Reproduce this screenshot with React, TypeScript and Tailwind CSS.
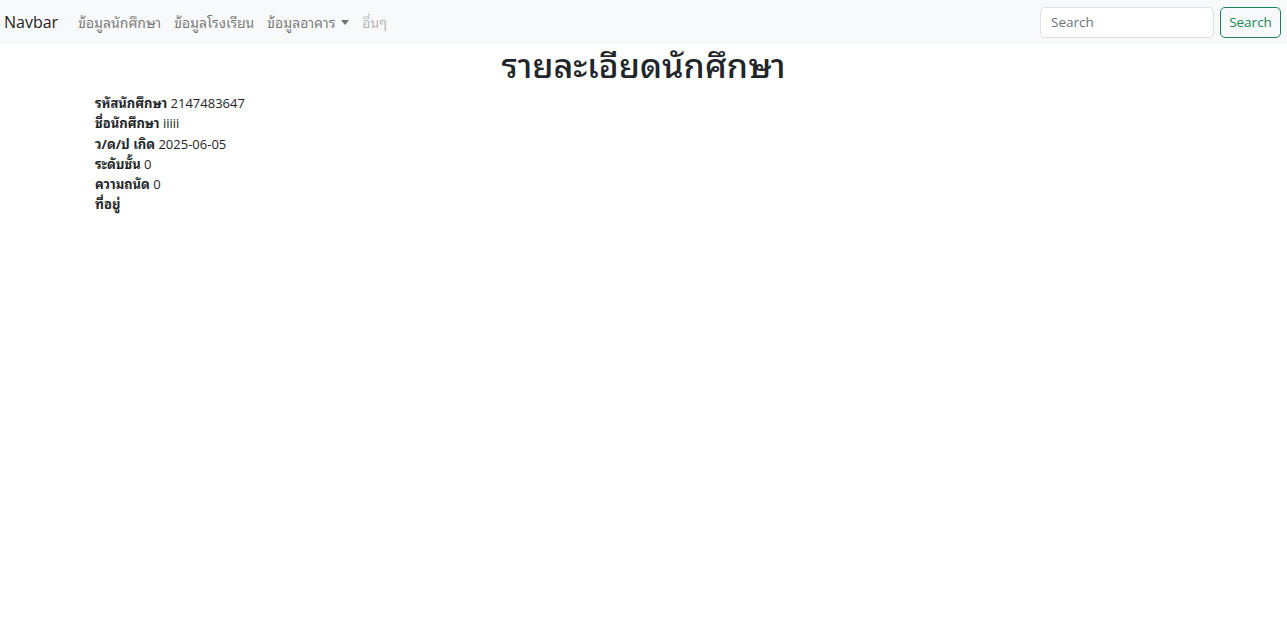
export default function App() {
  const rows: [string, string][] = [
    ["รหัสนักศึกษา", "2147483647"],
    ["ชื่อนักศึกษา", "iiiii"],
    ["ว/ด/ป เกิด", "2025-06-05"],
    ["ระดับชั้น", "0"],
    ["ความถนัด", "0"],
    ["ที่อยู่", ""],
  ];

  return (
    <div
      className="min-h-screen bg-white text-[#212529]"
      style={{ fontFamily: '"Open Sans", "Noto Sans Thai Looped", sans-serif' }}
    >
      {/* navbar */}
      <nav className="flex h-[44px] items-center bg-[#f8f9fa] pl-[4px] pr-[6px]">
        <a className="mr-[20px] text-[16px] leading-none text-black/90">Navbar</a>
        <ul className="flex items-center gap-[13px] text-[14px] text-black/55">
          <li>ข้อมูลนักศึกษา</li>
          <li>ข้อมูลโรงเรียน</li>
          <li className="flex items-center gap-[6px]">
            ข้อมูลอาคาร
            <span className="inline-block h-0 w-0 border-x-[4px] border-t-[5px] border-x-transparent border-t-black/55" />
          </li>
          <li className="text-black/30">อื่นๆ</li>
        </ul>
        <form className="ml-auto flex items-center gap-[6px]">
          <input
            placeholder="Search"
            className="h-[31px] w-[174px] rounded-[5px] border border-[#dee2e6] bg-white px-[10px] text-[13.5px] placeholder:text-[#6c757d] outline-none"
          />
          <button
            type="button"
            className="h-[31px] w-[61px] rounded-[5px] border border-[#198754] text-[13.5px] text-[#198754]"
          >
            Search
          </button>
        </form>
      </nav>

      {/* content */}
      <h1 className="mt-[2px] text-center text-[34px] font-medium leading-[1.15]">รายละเอียดนักศึกษา</h1>
      <div className="mt-[8px] pl-[95px] text-[13px] leading-[20.2px]">
        {rows.map(([label, value]) => (
          <div key={label}>
            <span className="font-bold">{label}</span> {value}
          </div>
        ))}
      </div>
    </div>
  );
}
